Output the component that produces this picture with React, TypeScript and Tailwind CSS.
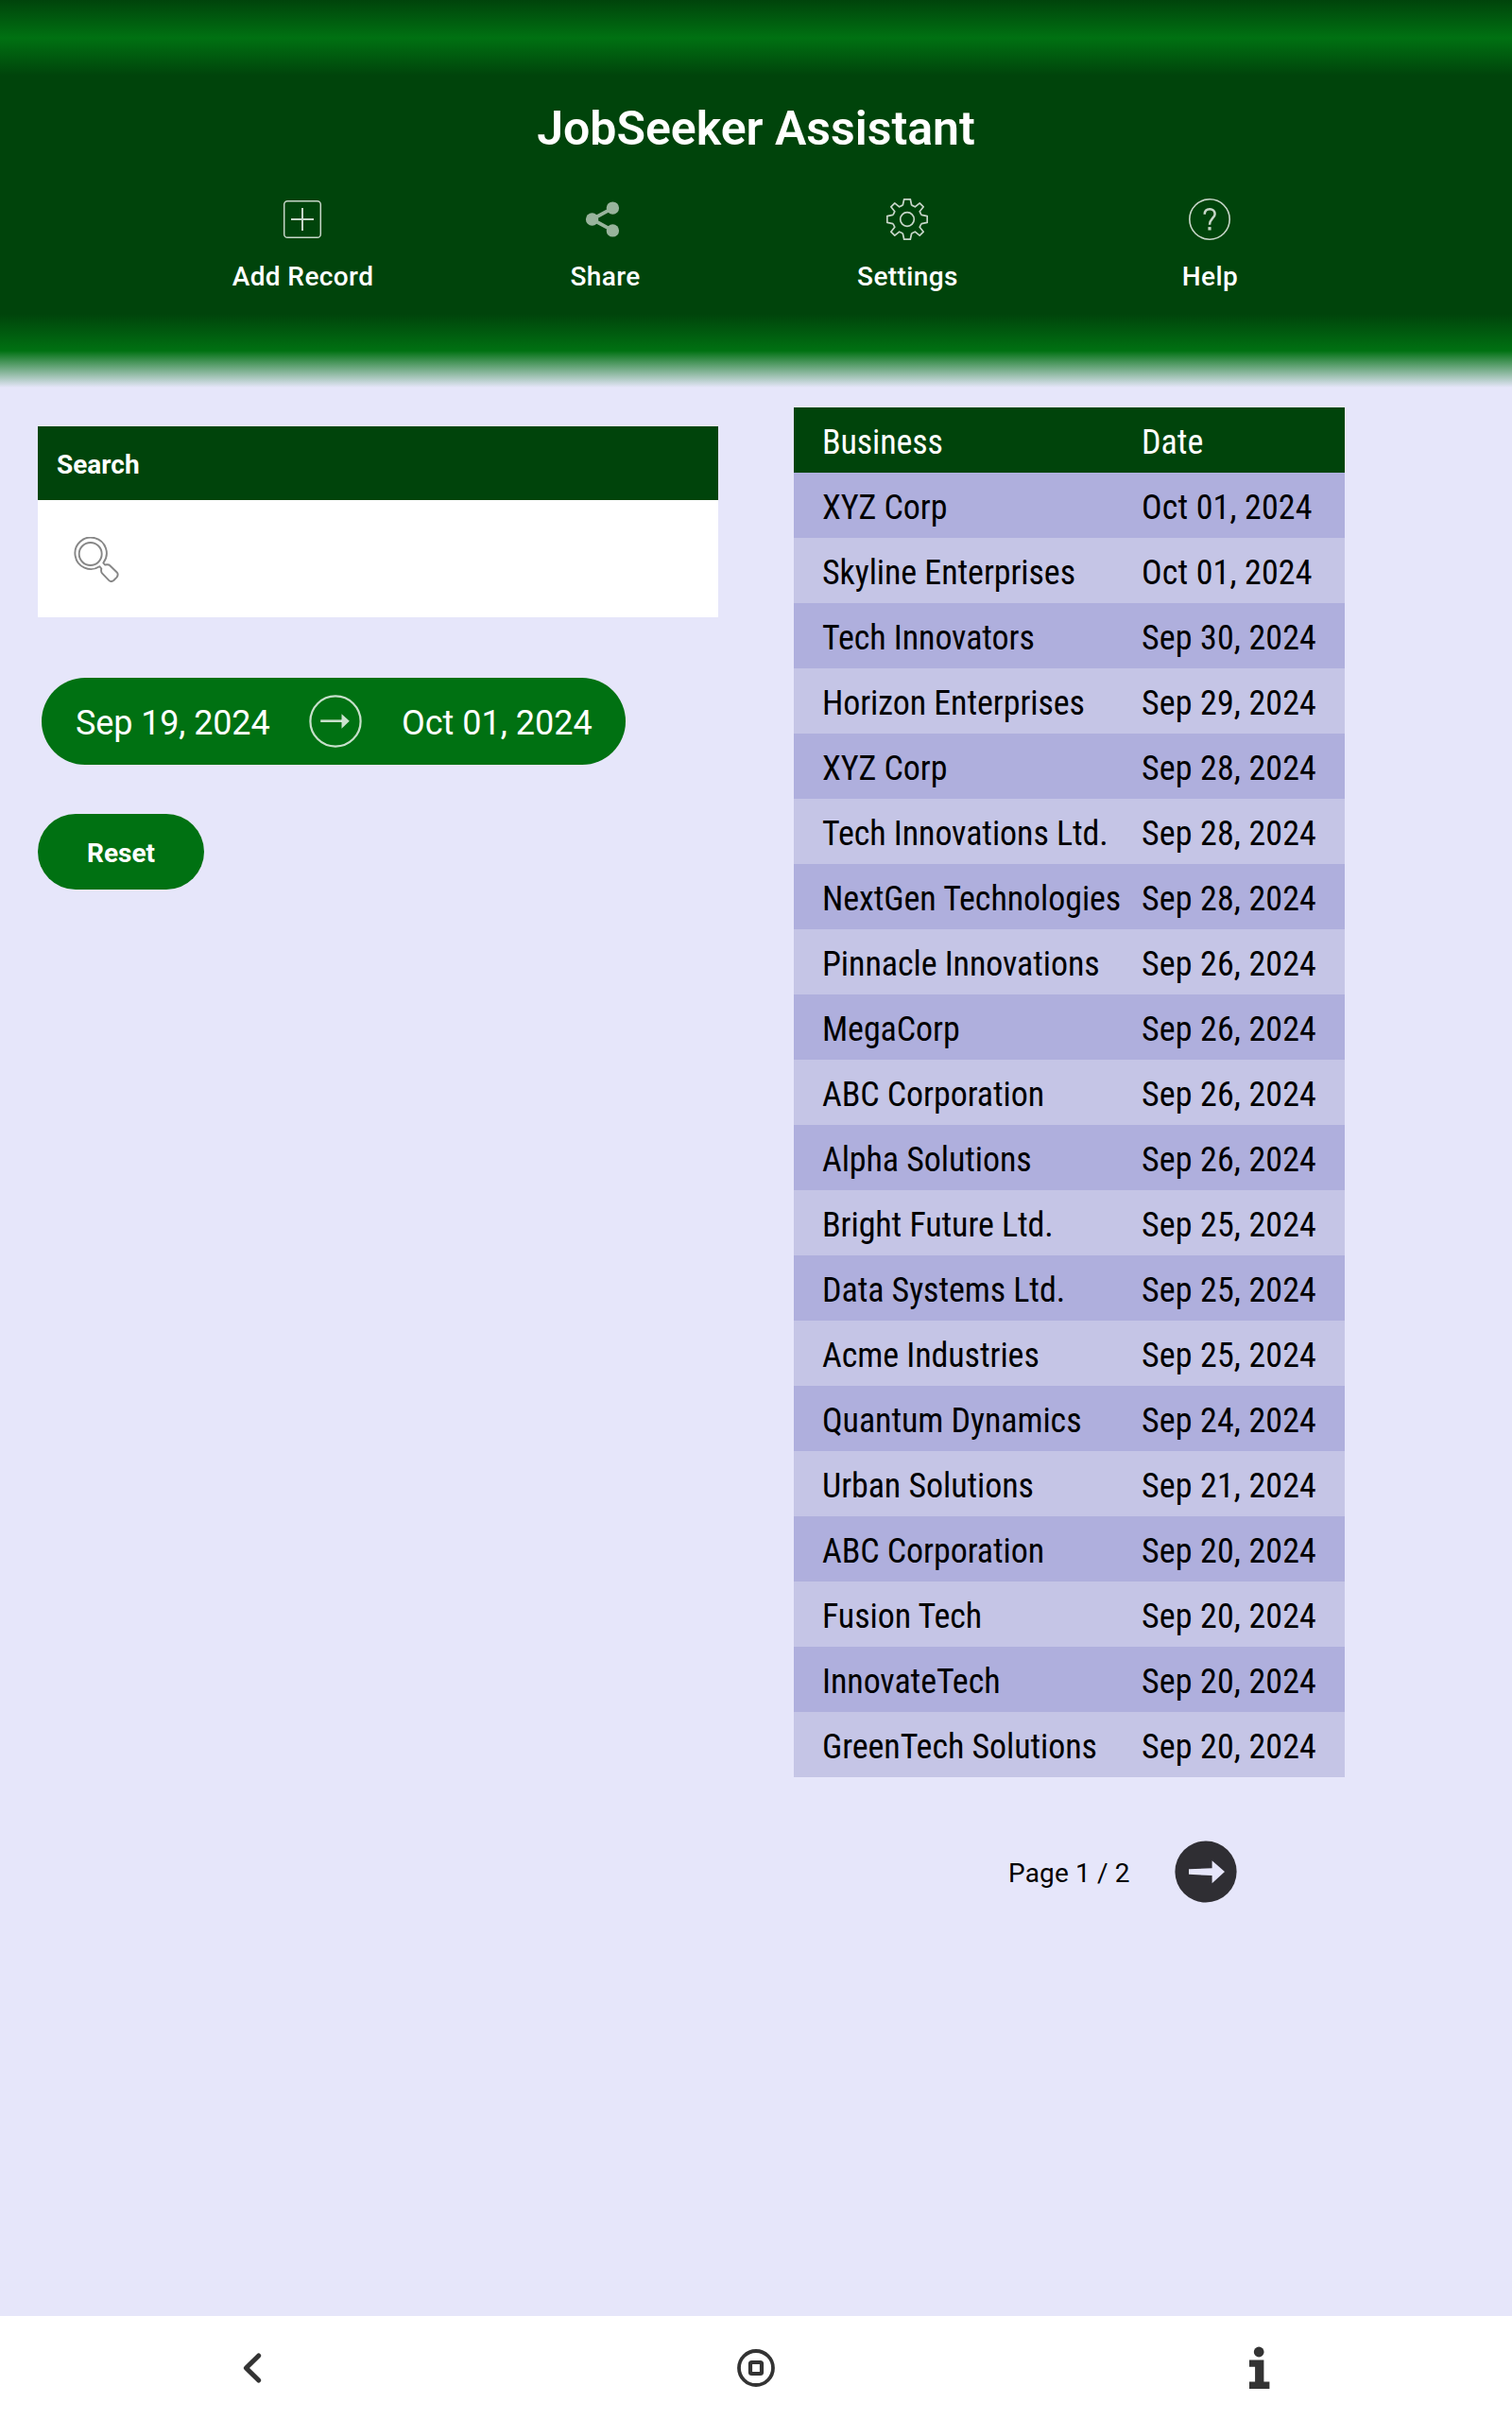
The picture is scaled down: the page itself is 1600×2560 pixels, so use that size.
import type { ReactNode } from "react";

const records: [string, string][] = [
  ["XYZ Corp", "Oct 01, 2024"],
  ["Skyline Enterprises", "Oct 01, 2024"],
  ["Tech Innovators", "Sep 30, 2024"],
  ["Horizon Enterprises", "Sep 29, 2024"],
  ["XYZ Corp", "Sep 28, 2024"],
  ["Tech Innovations Ltd.", "Sep 28, 2024"],
  ["NextGen Technologies", "Sep 28, 2024"],
  ["Pinnacle Innovations", "Sep 26, 2024"],
  ["MegaCorp", "Sep 26, 2024"],
  ["ABC Corporation", "Sep 26, 2024"],
  ["Alpha Solutions", "Sep 26, 2024"],
  ["Bright Future Ltd.", "Sep 25, 2024"],
  ["Data Systems Ltd.", "Sep 25, 2024"],
  ["Acme Industries", "Sep 25, 2024"],
  ["Quantum Dynamics", "Sep 24, 2024"],
  ["Urban Solutions", "Sep 21, 2024"],
  ["ABC Corporation", "Sep 20, 2024"],
  ["Fusion Tech", "Sep 20, 2024"],
  ["InnovateTech", "Sep 20, 2024"],
  ["GreenTech Solutions", "Sep 20, 2024"],
];

function AddIcon() {
  return (
    <svg viewBox="-22 -22 44 44" className="size-11" fill="none" stroke="#fff" strokeOpacity={0.78}>
      <rect x={-19.3} y={-19.3} width={38.6} height={38.6} rx={3.6} strokeWidth={1.5} />
      <path d="M-12 0H12M0 -12V12" strokeWidth={2} />
    </svg>
  );
}

function ShareIcon() {
  return (
    <svg viewBox="-22 -22 44 44" className="size-11 opacity-60" fill="#fff" stroke="#fff">
      <path d="M8.4 -11.9L-13.5 0L8.4 11.9" fill="none" strokeWidth={3.8} />
      <circle cx={-13.4} cy={0} r={6.7} stroke="none" />
      <circle cx={8.4} cy={-11.9} r={6.7} stroke="none" />
      <circle cx={8.4} cy={11.9} r={6.7} stroke="none" />
    </svg>
  );
}

function GearIcon() {
  return (
    <svg viewBox="-22 -22 44 44" className="size-11" fill="none" stroke="#fff" strokeOpacity={0.78} strokeWidth={1.7} strokeLinejoin="round">
      <circle r={7.3} />
      <path d="M-3.3 -21.2H3.3L4.6 -15.2Q5 -14.6 8.3 -13.2L13.2 -17.2L17.2 -13.2L13.2 -8.3Q14.6 -5 15.2 -4.6L21.2 -3.3V3.3L15.2 4.6Q14.6 5 13.2 8.3L17.2 13.2L13.2 17.2L8.3 13.2Q5 14.6 4.6 15.2L3.3 21.2H-3.3L-4.6 15.2Q-5 14.6 -8.3 13.2L-13.2 17.2L-17.2 13.2L-13.2 8.3Q-14.6 5 -15.2 4.6L-21.2 3.3V-3.3L-15.2 -4.6Q-14.6 -5 -13.2 -8.3L-17.2 -13.2L-13.2 -17.2L-8.3 -13.2Q-5 -14.6 -4.6 -15.2Z" />
    </svg>
  );
}

function HelpIcon() {
  return (
    <svg viewBox="-22 -22 44 44" className="size-11" fill="none" stroke="#fff" strokeOpacity={0.78}>
      <circle r={21.2} strokeWidth={1.6} />
      <path d="M-5.3 -5.2C-5.3 -9 -3 -10.8 0.2 -10.8S5.6 -8.8 5.6 -5.6C5.6 -1.6 0 -0.6 0 5.8" strokeWidth={2.5} />
      <path d="M-1.6 9.8H1.6" strokeWidth={3.4} />
    </svg>
  );
}

function SearchIcon() {
  return (
    <svg viewBox="78 567 48 48" className="size-12" fill="none" stroke="#868686" strokeWidth={1.9} strokeLinejoin="round">
      <circle cx={95.7} cy={585} r={12} />
      <path d="M105.3 598.2A16.7 16.7 0 1 1 109.3 594.5L111 596.5Q115 595.8 116.3 597.2L123.5 604.2Q125.8 606.6 123.6 609.6L120.3 613Q117.6 615.2 115.2 612.8L108 605.4Q106.6 603.8 107.3 600.5Z" />
    </svg>
  );
}

function RangeArrow() {
  return (
    <svg viewBox="-28 -28 56 56" className="size-14" fill="none" stroke="#fff" strokeOpacity={0.78}>
      <circle r={26.6} strokeWidth={2.2} />
      <path d="M-15.8 -0.3H7" strokeWidth={2.6} />
      <path d="M6.5 -7.8L14.8 -0.3L6.5 7.8Z" fill="#fff" fillOpacity={0.8} stroke="none" />
    </svg>
  );
}

function NextIcon() {
  return (
    <svg viewBox="-33 -33 66 66" className="size-[66px]">
      <circle r={32.6} fill="#2f2e33" />
      <path d="M-18 -2.8L6.6 -3.8V-11.8L20 0L6.6 12.2V4L-18 2.8Z" fill="#e6e6fa" />
    </svg>
  );
}

function Action({ icon, label }: { icon: ReactNode; label: string }) {
  return (
    <button className="flex flex-col items-center gap-[22px]">
      {icon}
      <span className="pl-px text-[28px] leading-[34px] font-medium tracking-[0.4px]">{label}</span>
    </button>
  );
}

export default function App() {
  return (
    <div className="flex h-[2560px] w-[1600px] flex-col bg-[#e6e6fa] font-['Roboto',sans-serif] text-black">
      <header className="h-[410px] shrink-0 bg-[linear-gradient(to_bottom,#00440b_0px,#007112_40px,#00440b_80px,#00440b_332px,#007112_371px,#e6e6fa_410px)] px-40 pt-[106px] text-white">
        <h1 className="text-center text-[50px] leading-[60px] font-[560]">JobSeeker Assistant</h1>
        <nav className="mt-11 grid grid-cols-4">
          <Action icon={<AddIcon />} label="Add Record" />
          <Action icon={<ShareIcon />} label="Share" />
          <Action icon={<GearIcon />} label="Settings" />
          <Action icon={<HelpIcon />} label="Help" />
        </nav>
      </header>

      <main className="grid flex-1 grid-cols-2">
        <section className="flex flex-col items-start px-10 pt-[41px]">
          <div className="w-full">
            <h2 className="flex h-[78px] items-center bg-[#00440b] px-5 pt-[3px] text-[28px] font-bold text-white">Search</h2>
            <div className="flex h-[124px] items-center bg-white px-[38px] pt-px">
              <SearchIcon />
            </div>
          </div>
          <div className="mt-16 ml-1 flex h-[92px] w-[618px] items-center rounded-full bg-[#007112] pl-9 text-4xl text-white">
            <span className="w-[247px] pt-[3px] tracking-[-0.12px]">Sep 19, 2024</span>
            <RangeArrow />
            <span className="ml-[42px] pt-[3px]">Oct 01, 2024</span>
          </div>
          <button className="mt-[52px] h-20 w-44 rounded-full bg-[#007112] pt-[3px] text-[28px] font-bold text-white">Reset</button>
        </section>

        <section className="px-10 pt-[21px]">
          <table className="w-[583px] table-fixed text-left text-4xl font-stretch-75%">
            <thead>
              <tr className="h-[69px] bg-[#00440b] text-white">
                <th className="w-[338px] pt-1 pl-[30px] font-normal tracking-[-0.12px]">Business</th>
                <th className="pt-1 pl-[30px] font-normal">Date</th>
              </tr>
            </thead>
            <tbody>
              {records.map(([business, date], i) => (
                <tr key={i} className="h-[69px] bg-[#c5c5e6] odd:bg-[#afafdd]">
                  <td className="pt-1 pl-[30px] tracking-[-0.08px] whitespace-nowrap">{business}</td>
                  <td className="pt-1 pl-[30px] tracking-[0.12px] whitespace-nowrap">{date}</td>
                </tr>
              ))}
            </tbody>
          </table>
          <div className="mt-[67px] flex items-center pl-[227px]">
            <span className="w-[176px] pt-[3px] text-[28px] tracking-[0.15px]">Page 1 / 2</span>
            <button>
              <NextIcon />
            </button>
          </div>
        </section>
      </main>

      <footer className="grid h-[110px] shrink-0 grid-cols-3 place-items-center bg-white">
        <svg viewBox="-24 -24 48 48" className="size-12" fill="none" stroke="#333" strokeWidth={5.2} strokeLinecap="round" strokeLinejoin="round">
          <path d="M6.7 -13L-6.6 0L6.7 13" />
        </svg>
        <svg viewBox="-24 -24 48 48" className="size-12" fill="none" stroke="#333">
          <circle r={18} strokeWidth={3.8} />
          <rect x={-6} y={-6} width={12} height={12} rx={1.5} strokeWidth={4.2} />
        </svg>
        <svg viewBox="-24 -24 48 48" className="size-12" fill="#333">
          <circle cx={-0.8} cy={-17} r={5.4} />
          <path d="M-11 -8.6H4.4V14.6H10.4V22H-11V14.6H-4.9V-1.3H-11Z" />
        </svg>
      </footer>
    </div>
  );
}
